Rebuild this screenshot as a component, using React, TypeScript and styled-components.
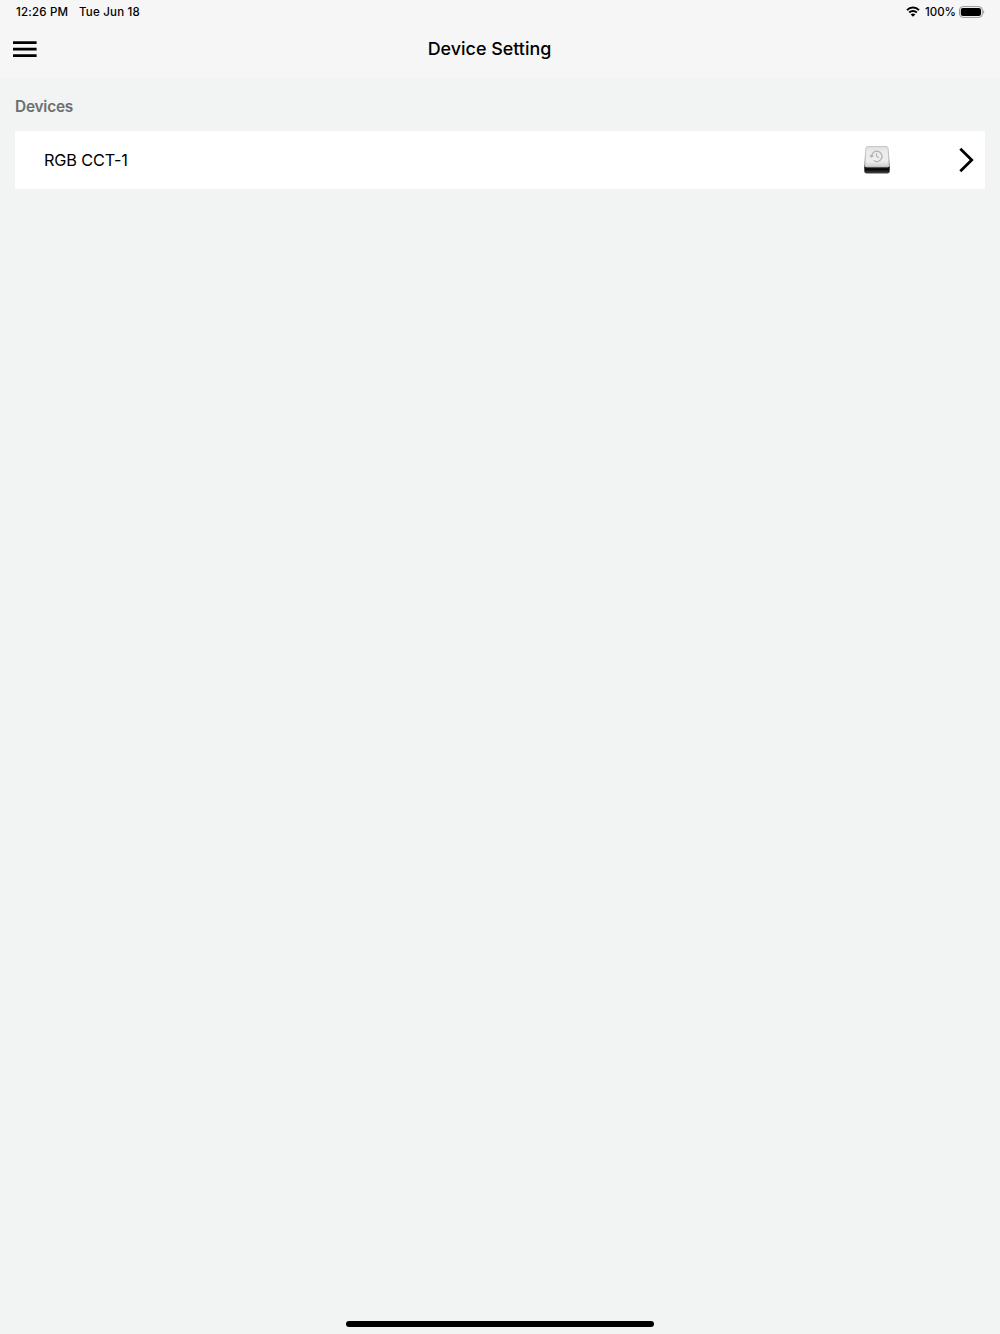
import styled, { createGlobalStyle } from "styled-components";

interface Device {
  id: number;
  name: string;
}

const devices: Device[] = [{ id: 1, name: "RGB CCT-1" }];

export default function App() {
  return (
    <Screen>
      <GlobalStyle />
      <StatusBar>
        <StatusGroup>
          <StatusText width={53}>12:26 PM</StatusText>
          <StatusText>Tue Jun 18</StatusText>
        </StatusGroup>
        <StatusRight>
          <WifiIcon />
          <BatteryText>100%</BatteryText>
          <BatteryIcon />
        </StatusRight>
      </StatusBar>

      <NavBar>
        <MenuButton aria-label="Menu">
          <MenuIcon />
        </MenuButton>
        <Title>Device Setting</Title>
      </NavBar>

      <Content>
        <SectionTitle>Devices</SectionTitle>
        {devices.map((device) => (
          <DeviceRow key={device.id}>
            <DeviceName>{device.name}</DeviceName>
            <RowIcons>
              <DriveIcon />
              <ChevronIcon />
            </RowIcons>
          </DeviceRow>
        ))}
      </Content>

      <HomeIndicator />
    </Screen>
  );
}

function WifiIcon() {
  return (
    <svg width="14" height="12" viewBox="0 0 14 12" fill="none" stroke="#000">
      <path d="M1 4.1C4.3 0.7 9.7 0.7 13 4.1" strokeWidth="2" />
      <path d="M3.2 6.5C5.3 4.4 8.7 4.4 10.8 6.5" strokeWidth="1.9" />
      <path d="M7 10.7 4.7 8.4C6 7.1 8 7.1 9.3 8.4Z" fill="#000" stroke="none" />
    </svg>
  );
}

function BatteryIcon() {
  return (
    <svg width="26" height="12" viewBox="0 0 26 12">
      <rect x="0.5" y="0.6" width="22.8" height="10.8" rx="3.4" fill="none" stroke="#999" />
      <rect x="1.8" y="1.9" width="20.2" height="8.2" rx="2.1" fill="#000" />
      <path d="M24.2 4.2C25.6 4.7 25.6 7.3 24.2 7.8Z" fill="#999" />
    </svg>
  );
}

function MenuIcon() {
  return (
    <svg width="24" height="18" viewBox="0 0 24 18" stroke="#000" strokeWidth="2.6">
      <path d="M0 2.6H23.6M0 9.1H23.6M0 15.6H23.6" />
    </svg>
  );
}

function DriveIcon() {
  return (
    <svg width="26" height="28" viewBox="0 0 26 28">
      <defs>
        <linearGradient id="drive-top" x1="0" y1="0" x2="0" y2="1">
          <stop offset="0" stopColor="#dedede" />
          <stop offset="0.25" stopColor="#ececec" />
          <stop offset="0.7" stopColor="#eeeeee" />
          <stop offset="1" stopColor="#c8c8c8" />
        </linearGradient>
        <linearGradient id="drive-edge" x1="0" y1="0" x2="0" y2="1">
          <stop offset="0" stopColor="#c4c4c4" />
          <stop offset="0.5" stopColor="#b4b4b4" />
          <stop offset="1" stopColor="#777" />
        </linearGradient>
        <linearGradient id="drive-front" x1="0" y1="0" x2="0" y2="1">
          <stop offset="0" stopColor="#222" />
          <stop offset="0.4" stopColor="#050505" />
          <stop offset="1" stopColor="#484848" />
        </linearGradient>
      </defs>
      <path
        d="M4 0.5H22Q23.9 0.5 24.1 2.3L25.5 21.4H0.5L1.9 2.3Q2.1 0.5 4 0.5Z"
        fill="url(#drive-top)"
        stroke="url(#drive-edge)"
        strokeWidth="0.9"
      />
      <path d="M0.3 20.6 2.6 21.4H23.4L25.7 20.6V25.6Q25.7 27.3 23.8 27.5H2.2Q0.3 27.3 0.3 25.6Z" fill="url(#drive-front)" />
      <path d="M7.6 10.2A5.2 5.2 0 1 1 9.5 14.4" fill="none" stroke="#b0b0b0" strokeWidth="1.2" />
      <path d="M5.2 9.2H10L7.6 12Z" fill="#b0b0b0" />
      <path d="M12.6 7.2V10.5L15.2 11.6" fill="none" stroke="#aaa" />
    </svg>
  );
}

function ChevronIcon() {
  return (
    <svg width="15" height="27" viewBox="0 0 15 27" fill="none">
      <path d="M1.3 2.7 12.7 14 1.3 25.3" stroke="#000" strokeWidth="2.8" />
    </svg>
  );
}

const GlobalStyle = createGlobalStyle`
  body {
    margin: 0;
    background: #f1f4f3;
  }
`;

const Screen = styled.div`
  display: flex;
  flex-direction: column;
  box-sizing: border-box;
  height: 1334px;
  padding-bottom: 7px;
  font-family: Inter, "Liberation Sans", sans-serif;
  color: #000;
  background: #f1f4f3;
`;

const StatusBar = styled.header`
  display: flex;
  justify-content: space-between;
  align-items: center;
  height: 24px;
  padding: 0 15px 0 16px;
  background: #f6f6f6;
`;

const StatusGroup = styled.div`
  display: flex;
  align-items: center;
  gap: 10px;
`;

const StatusRight = styled.div`
  display: flex;
  align-items: center;
`;

const StatusText = styled.span<{ width?: number }>`
  width: ${(props) => (props.width ? `${props.width}px` : "auto")};
  font-size: 11.5px;
  font-weight: 500;
  line-height: 24px;
  letter-spacing: 0.2px;
  white-space: nowrap;
`;

const BatteryText = styled(StatusText)`
  margin: 0 3px 0 5px;
  letter-spacing: 0;
`;

const NavBar = styled.nav`
  display: grid;
  grid-template-columns: 49px 1fr 70px;
  align-items: center;
  height: 54px;
  padding-bottom: 4px;
  box-sizing: border-box;
  background: #f6f6f6;
`;

const MenuButton = styled.button`
  display: flex;
  width: 24px;
  margin: 0 0 0 13px;
  padding: 0;
  border: 0;
  background: none;
`;

const Title = styled.h1`
  margin: 0;
  font-size: 17.9px;
  font-weight: 500;
  line-height: 24px;
  text-align: center;
`;

const Content = styled.main`
  display: flex;
  flex: 1;
  flex-direction: column;
  padding: 17px 15px 0;
`;

const SectionTitle = styled.h2`
  margin: 0 0 11.5px;
  font-size: 15.4px;
  font-weight: 600;
  line-height: 24px;
  letter-spacing: -0.2px;
  color: #6d6e6e;
`;

const DeviceRow = styled.div`
  display: flex;
  align-items: center;
  height: 58.5px;
  padding: 0 11px 0 29px;
  background: #fff;
`;

const DeviceName = styled.span`
  flex: 1;
  font-size: 16.3px;
  line-height: 24px;
  letter-spacing: -0.15px;
`;

const RowIcons = styled.div`
  display: flex;
  align-items: center;
  gap: 69px;
`;

const HomeIndicator = styled.div`
  align-self: center;
  width: 308px;
  height: 6px;
  border-radius: 3px;
  background: #000;
`;
